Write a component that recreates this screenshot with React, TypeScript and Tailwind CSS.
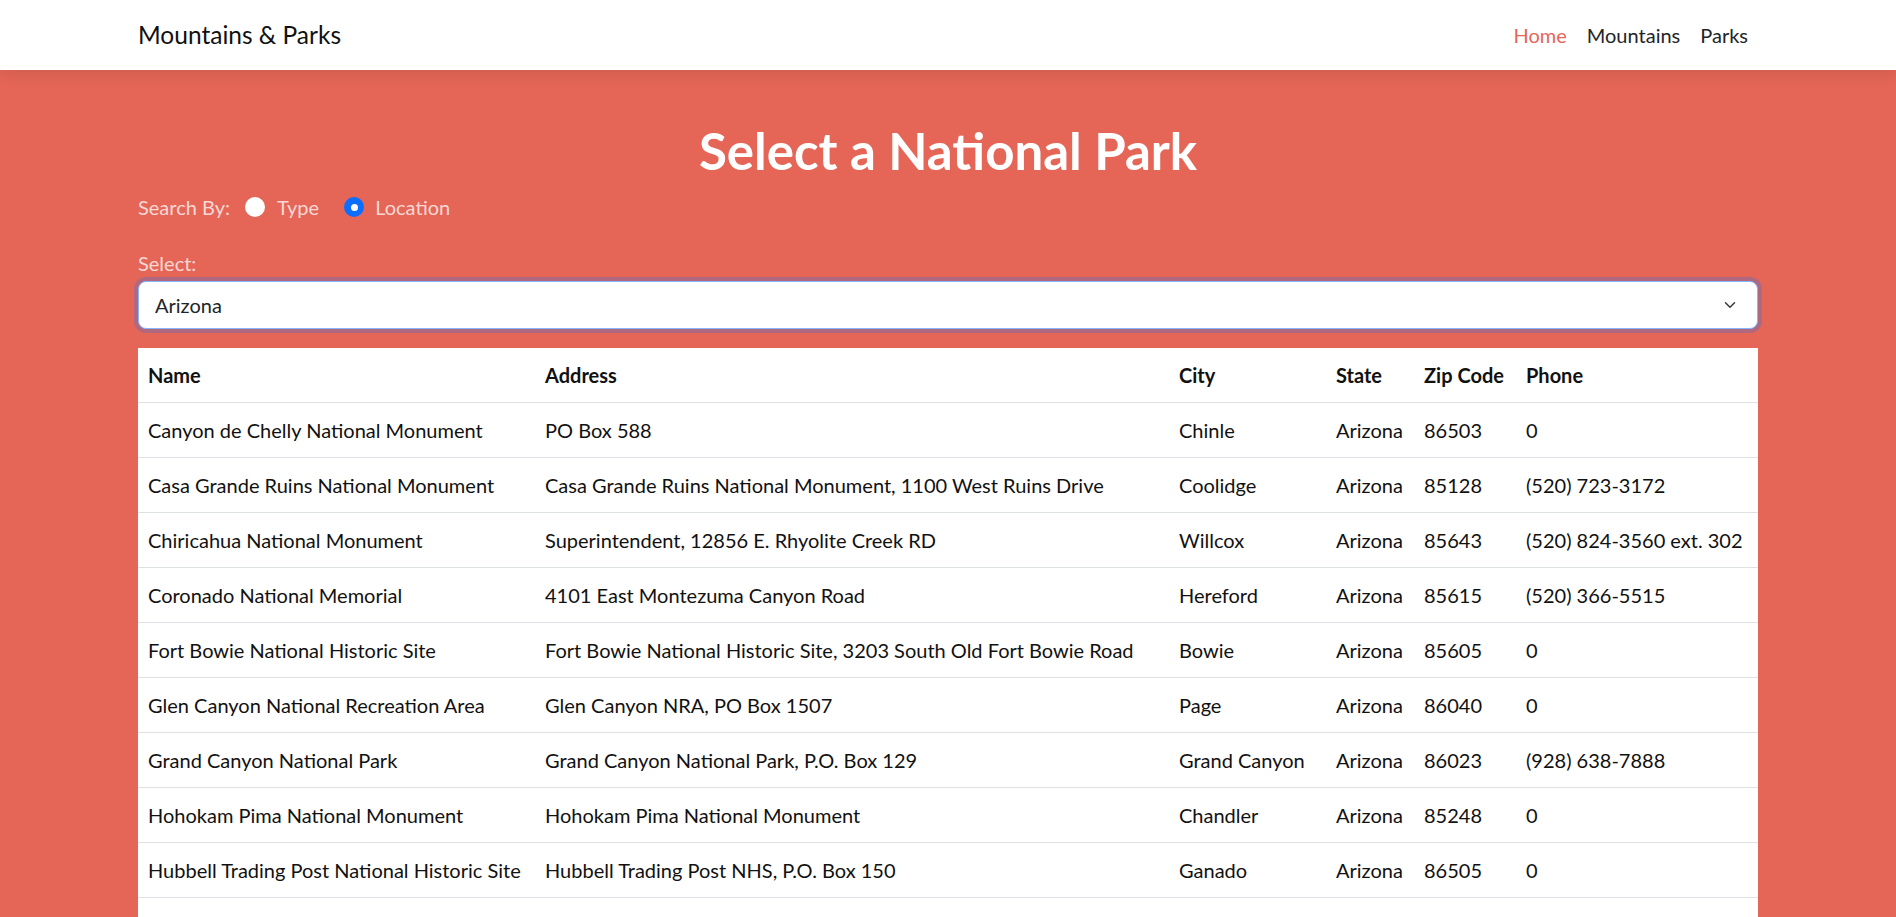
import React from "react";

const rows: [string, string, string, string, string, string][] = [
  ["Canyon de Chelly National Monument", "PO Box 588", "Chinle", "Arizona", "86503", "0"],
  ["Casa Grande Ruins National Monument", "Casa Grande Ruins National Monument, 1100 West Ruins Drive", "Coolidge", "Arizona", "85128", "(520) 723-3172"],
  ["Chiricahua National Monument", "Superintendent, 12856 E. Rhyolite Creek RD", "Willcox", "Arizona", "85643", "(520) 824-3560 ext. 302"],
  ["Coronado National Memorial", "4101 East Montezuma Canyon Road", "Hereford", "Arizona", "85615", "(520) 366-5515"],
  ["Fort Bowie National Historic Site", "Fort Bowie National Historic Site, 3203 South Old Fort Bowie Road", "Bowie", "Arizona", "85605", "0"],
  ["Glen Canyon National Recreation Area", "Glen Canyon NRA, PO Box 1507", "Page", "Arizona", "86040", "0"],
  ["Grand Canyon National Park", "Grand Canyon National Park, P.O. Box 129", "Grand Canyon", "Arizona", "86023", "(928) 638-7888"],
  ["Hohokam Pima National Monument", "Hohokam Pima National Monument", "Chandler", "Arizona", "85248", "0"],
  ["Hubbell Trading Post National Historic Site", "Hubbell Trading Post NHS, P.O. Box 150", "Ganado", "Arizona", "86505", "0"],
  ["Montezuma Castle National Monument", "P.O. Box 219", "Camp Verde", "Arizona", "86322", "(928) 567-3322"],
  ["Navajo National Monument", "HC 71 Box 3", "Tonalea", "Arizona", "86044", "(928) 672-2700"],
  ["Organ Pipe Cactus National Monument", "10 Organ Pipe Drive", "Ajo", "Arizona", "85321", "(520) 387-6849"],
  ["Petrified Forest National Park", "P.O. Box 2217", "Petrified Forest", "Arizona", "86028", "(928) 524-6228"],
];

export default function App() {
  const font = { fontFamily: "Lato, 'Noto Sans', sans-serif" };
  return (
    <div className="min-h-screen bg-[#e56657]" style={font}>
      <nav className="relative z-10 h-[70px] bg-white shadow-[0_2px_18px_rgba(0,0,0,0.12)]">
        <div className="mx-auto flex h-full w-[1620px] items-center justify-between">
          <span className="text-[24.5px] text-[#111]">Mountains &amp; Parks</span>
          <div className="flex items-center gap-[20px] pr-[10px] text-[20px]">
            <a className="text-[#e56657]">Home</a>
            <a className="text-[#212529]">Mountains</a>
            <a className="text-[#212529]">Parks</a>
          </div>
        </div>
      </nav>
      <main className="mx-auto w-[1620px] pt-[51px]">
        <h1 className="text-center text-[51px] font-bold leading-[60px] text-white">Select a National Park</h1>
        <div className="mt-[13px] flex h-[26px] items-center text-[20px] text-white/75">
          <span>Search By:</span>
          <span className="ml-[15px] inline-block h-[20px] w-[20px] rounded-full bg-white" />
          <span className="ml-[12px]">Type</span>
          <span className="ml-[25px] flex h-[20px] w-[20px] items-center justify-center rounded-full bg-[#0d6efd]">
            <span className="h-[7px] w-[7px] rounded-full bg-white" />
          </span>
          <span className="ml-[11px]">Location</span>
        </div>
        <div className="mt-[30px] text-[20px] leading-[26px] text-white/75">Select:</div>
        <div className="relative mt-[5px]">
          <select
            defaultValue="Arizona"
            className="h-[48px] w-full appearance-none rounded-[8px] border border-[#86b7fe] bg-white pl-[16px] text-[20px] text-[#212529] shadow-[0_0_0_4px_rgba(13,110,253,0.25)] outline-none"
            style={font}
          >
            <option>Arizona</option>
          </select>
          <svg className="pointer-events-none absolute right-[21px] top-[18px]" width="14" height="12" viewBox="0 0 16 16">
            <path d="M2 5l6 6 6-6" fill="none" stroke="#343a40" strokeWidth="2" strokeLinecap="round" strokeLinejoin="round" />
          </svg>
        </div>
        <table className="mt-[19px] w-full table-fixed border-collapse bg-white text-left text-[20px] text-[#111]">
          <colgroup>
            <col className="w-[397px]" />
            <col className="w-[634px]" />
            <col className="w-[157px]" />
            <col className="w-[88px]" />
            <col className="w-[102px]" />
            <col />
          </colgroup>
          <thead>
            <tr className="h-[54px] border-b border-[#dee2e6]">
              {["Name", "Address", "City", "State", "Zip Code", "Phone"].map((h) => (
                <th key={h} className="whitespace-nowrap px-[10px] font-bold">{h}</th>
              ))}
            </tr>
          </thead>
          <tbody>
            {rows.map((r) => (
              <tr key={r[0]} className="h-[55px] border-b border-[#dee2e6]">
                {r.map((c, i) => (
                  <td key={i} className="whitespace-nowrap px-[10px]">{c}</td>
                ))}
              </tr>
            ))}
          </tbody>
        </table>
      </main>
    </div>
  );
}
